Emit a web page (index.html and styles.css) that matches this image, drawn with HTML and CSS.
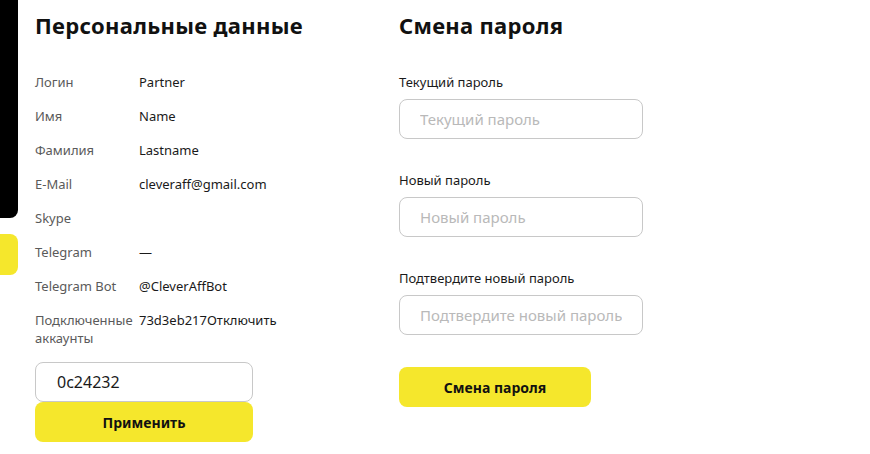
FILE: index.html
```html
<!DOCTYPE html>
<html lang="ru">
  <head>
    <meta charset="UTF-8" />
    <meta name="viewport" content="width=device-width, initial-scale=1.0" />
    <title>Профиль</title>
    <link rel="stylesheet" href="styles.css">
  </head>

  <body>
    <div class="page">
      <aside class="side">
        <div class="side-dark"></div>
        <div class="side-active"></div>
      </aside>

      <main class="content">
        <section class="personal">
          <h2>Персональные данные</h2>

          <div class="info">
            <span class="info-label">Логин</span>
            <span class="info-value">Partner</span>

            <span class="info-label">Имя</span>
            <span class="info-value">Name</span>

            <span class="info-label">Фамилия</span>
            <span class="info-value">Lastname</span>

            <span class="info-label">E-Mail</span>
            <span class="info-value">cleveraff@gmail.com</span>

            <span class="info-label">Skype</span>
            <span class="info-value"></span>

            <span class="info-label">Telegram</span>
            <span class="info-value">—</span>

            <span class="info-label">Telegram Bot</span>
            <span class="info-value">@CleverAffBot</span>

            <span class="info-label">Подключенные аккаунты</span>
            <span class="info-value">73d3eb217<a href="#" class="unlink">Отключить</a></span>
          </div>

          <form class="code-form">
            <input type="text" class="field code-field" value="0c24232" />
            <button type="button" class="btn btn-wide">Применить</button>
          </form>
        </section>

        <section class="password">
          <h2>Смена пароля</h2>

          <form class="pass-form">
            <label class="pass-group">
              <span class="pass-label">Текущий пароль</span>
              <input type="password" class="field" placeholder="Текущий пароль" />
            </label>

            <label class="pass-group">
              <span class="pass-label">Новый пароль</span>
              <input type="password" class="field" placeholder="Новый пароль" />
            </label>

            <label class="pass-group">
              <span class="pass-label">Подтвердите новый пароль</span>
              <input type="password" class="field" placeholder="Подтвердите новый пароль" />
            </label>

            <button type="button" class="btn btn-pass">Смена пароля</button>
          </form>
        </section>
      </main>
    </div>
  </body>
</html>
```

FILE: styles.css
```css
body {
  margin: 0;
  font-family: "Noto Sans", "Open Sans", sans-serif;
  color: #1a1a1a;
  background: #fff;
}

.page {
  display: flex;
  height: 454px;
  overflow: hidden;
}

.side {
  width: 18px;
  display: flex;
  flex-direction: column;
  gap: 16px;
  flex-shrink: 0;
}

.side-dark {
  height: 218px;
  background: #000;
  border-radius: 0 0 8px 0;
}

.side-active {
  height: 41px;
  background: #f5e72c;
  border-radius: 0 8px 8px 0;
}

.content {
  display: flex;
  gap: 146px;
  padding-left: 17px;
}

h2 {
  margin: 0;
  padding-top: 11px;
  font-size: 22px;
  line-height: 28px;
  font-weight: 700;
  color: #111;
  white-space: nowrap;
  letter-spacing: 0.3px;
}

.personal {
  width: 218px;
}

.info {
  display: grid;
  grid-template-columns: 104px auto;
  grid-auto-rows: minmax(34px, auto);
  margin-top: 34px;
  font-size: 13px;
  line-height: 18px;
}

.info-label {
  color: #5a5a5a;
}

.info-value {
  color: #1a1a1a;
  white-space: nowrap;
}

.unlink {
  color: #1a1a1a;
  text-decoration: none;
}

.code-form {
  margin-top: 15px;
  display: flex;
  flex-direction: column;
}

.field {
  box-sizing: border-box;
  width: 100%;
  height: 40px;
  border: 1px solid #c8c8c8;
  border-radius: 8px;
  padding: 0 20px;
  font-family: inherit;
  font-size: 15px;
  color: #1a1a1a;
  outline: none;
}

.field::placeholder {
  color: #b9b9b9;
}

.code-field {
  padding-left: 21px;
  font-size: 16px;
}

.btn {
  height: 40px;
  border: none;
  border-radius: 8px;
  background: #f5e72c;
  font-family: inherit;
  font-size: 14px;
  font-weight: 700;
  color: #111;
  cursor: pointer;
}

.btn-wide {
  width: 100%;
}

.password {
  width: 244px;
}

.pass-form {
  margin-top: 34px;
  display: flex;
  flex-direction: column;
  gap: 32px;
}

.pass-group {
  display: flex;
  flex-direction: column;
  gap: 8px;
}

.pass-label {
  font-size: 13px;
  line-height: 18px;
  color: #1a1a1a;
}

.btn-pass {
  width: 192px;
}
```
